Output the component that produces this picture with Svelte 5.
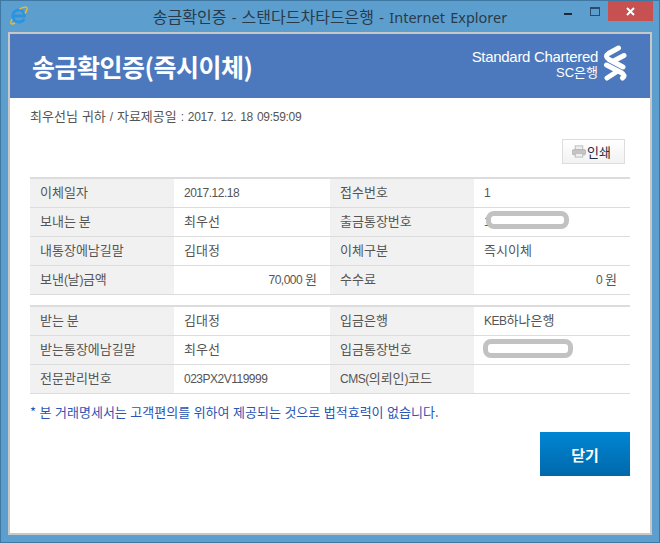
<script>
  const top = [
    ['이체일자', '2017.12.18', '접수번호', '1'],
    ['보내는 분', '최우선', '출금통장번호', ''],
    ['내통장에남길말', '김대정', '이체구분', '즉시이체'],
    ['보낸(날)금액', '70,000 원', '수수료', '0 원']
  ];
  const bottom = [
    ['받는 분', '김대정', '입금은행', 'KEB하나은행'],
    ['받는통장에남길말', '최우선', '입금통장번호', ''],
    ['전문관리번호', '023PX2V119999', 'CMS(의뢰인)코드', '']
  ];
  const runs = (text) => text.split(/([가-힣]+)/).filter(Boolean).map((t) => ({ t, ko: /[가-힣]/.test(t) }));
</script>

{#snippet mixed(text)}{#each runs(text) as r}<span class:lat={!r.ko}>{r.t}</span>{/each}{/snippet}

<div class="win">
  <div class="titlebar">
    <svg class="ie" width="20" height="20" viewBox="0 0 20 20">
      <path d="M4 10H15.500C15.500 6 12.500 4 9.800 4 6.500 4 3.700 6.800 3.700 10 3.700 13.500 6.500 16 9.800 16 12.200 16 14.200 14.800 15.200 13" fill="none" stroke="#2a94e0" stroke-width="2.800"/>
      <path d="M3 13C0.500 18 2 19 6 17M10.500 3.200C15 0.500 18.800 0.300 18 3 17.700 4.500 17 6 16 7.500" fill="none" stroke="#eeba2a" stroke-width="1.400"/>
    </svg>
    <div class="title">{#each runs('송금확인증 - 스탠다드차타드은행 - Internet Explorer') as r}<span class:tlat={!r.ko}>{r.t}</span>{/each}</div>
    <div class="controls">
      <span class="min"></span>
      <span class="max"></span>
      <span class="close">
        <svg width="9" height="9" viewBox="0 0 9 9"><path d="M1 1L8 8M8 1L1 8" stroke="#fff" stroke-width="2"/></svg>
      </span>
    </div>
  </div>

  <div class="page">
    <header class="banner">
      <h1>송금확인증(즉시이체)</h1>
      <div class="brand">
        <div class="brandtext">
          <div class="en">Standard Chartered</div>
          <div class="ko">SC은행</div>
        </div>
        <svg class="logo" width="24" height="36" viewBox="0 0 24 36">
          <g fill="none" stroke="#fff" stroke-width="5" stroke-linecap="round">
            <path d="M15.500 3L5.500 8.500C2.500 10.500 3 12.500 6 14.500L20 22"/>
            <path d="M21 10.500L10.500 16"/>
            <path d="M3.500 20L18 27.500C21.500 29.500 22 31.500 19.500 33"/>
            <path d="M4 33L12.500 27.500"/>
          </g>
        </svg>
      </div>
    </header>

    <div class="content">
      <p class="info">{@render mixed('최우선님 귀하 / 자료제공일 : 2017. 12. 18 09:59:09')}</p>
      <div class="actions">
        <button class="print">
          <svg width="14" height="13" viewBox="0 0 15 13">
            <rect x="3.500" y="0.500" width="8" height="4" fill="#eee" stroke="#bbb"/>
            <rect x="0.500" y="4.500" width="14" height="5.500" rx="1" fill="#c4c4c4" stroke="#b5b5b5"/>
            <rect x="3.500" y="8.500" width="8" height="4" fill="#eee" stroke="#bbb"/>
          </svg>
          <span>인쇄</span>
        </button>
      </div>

      {#each [top, bottom] as rows, t}
        <div class="table" class:second={t === 1}>
          {#each rows as row}
            <div class="row">
              <div class="th">{@render mixed(row[0])}</div>
              <div class="td" class:right={row[1].endsWith('원')}>{@render mixed(row[1])}</div>
              <div class="th">{@render mixed(row[2])}</div>
              <div class="td" class:right={row[3].endsWith('원')}>
                {#if row[2] === '출금통장번호'}
                  <span class="lat">1</span><span class="scribble a"></span>
                {:else if row[2] === '입금통장번호'}
                  <span class="scribble b"></span>
                {:else}
                  {@render mixed(row[3])}
                {/if}
              </div>
            </div>
          {/each}
        </div>
      {/each}

      <p class="note">* 본 거래명세서는 고객편의를 위하여 제공되는 것으로 법적효력이 없습니다.</p>

      <div class="footer">
        <button class="closebtn">닫기</button>
      </div>
    </div>
  </div>
</div>

<style>
  :global(html), :global(body) { margin: 0; padding: 0; }
  .win {
    width: 660px; height: 543px; box-sizing: border-box;
    background: #5c9fce;
    border: 1px solid #3f78a3;
    padding: 0 7px 7px 7px;
    display: flex; flex-direction: column;
    font-family: "Noto Sans CJK KR", "Liberation Sans", sans-serif;
    overflow: hidden;
  }
  .titlebar { height: 31px; display: flex; align-items: flex-start; position: relative; flex: none; }
  .ie { position: absolute; left: 1px; top: 5px; }
  .title {
    width: 100%; text-align: center; font-size: 16px; line-height: 20px; margin-top: 5px;
    color: #2b3a4a; box-sizing: border-box; word-spacing: 1.500px;
  }
  .tlat { font-family: "Noto Sans", sans-serif; font-size: 14.500px; }
  .controls { position: absolute; right: -1px; top: 0; display: flex; align-items: flex-start; }
  .min { width: 8px; height: 2px; background: #1c2a38; margin: 12px 18px 0 0; }
  .max { width: 8px; height: 6px; border: 1px solid #2d4a68; border-top-width: 2px; margin: 6px 8px 0 0; }
  .close { width: 45px; height: 20px; background: #c75050; display: flex; align-items: center; justify-content: center; }
  .page {
    flex: 1; background: #fff; border: 2px solid #c8c8c8;
    display: flex; flex-direction: column; min-height: 0;
  }
  .banner {
    height: 64px; flex: none; background: #4c78bd;
    display: flex; align-items: center; justify-content: space-between;
    padding: 0 23px 0 22px; color: #fff;
  }
  h1 { margin: 0; font-size: 25px; font-weight: 700; letter-spacing: -0.5px; }
  .brand { display: flex; align-items: flex-start; gap: 5px; margin-bottom: 2px; }
  .logo { margin-bottom: 4px; }
  .brandtext { text-align: right; line-height: 16px; margin-top: 4px; font-family: "Liberation Sans", "Noto Sans CJK KR", sans-serif; }
  .en { font-size: 15px; letter-spacing: -0.3px; }
  .ko { font-size: 13px; }
  .content { flex: 1; padding: 0 20px; font-size: 13px; color: #555; }
  .lat { font-family: "Liberation Sans", sans-serif; font-size: 12px; letter-spacing: -0.5px; }
  .info { margin: 0; padding-top: 10px; height: 30px; line-height: 15px; box-sizing: border-box; word-spacing: 1px; }
  .info .lat { letter-spacing: -0.3px; }
  .actions { display: flex; justify-content: flex-end; padding: 11px 5px 0 0; height: 38px; box-sizing: content-box; }
  .print {
    width: 63px; height: 25px; box-sizing: border-box; border: 1px solid #ddd;
    background: linear-gradient(#fff, #f2f2f2);
    display: flex; align-items: center; justify-content: center; gap: 1px;
    padding: 0 4px 0 0; font: inherit; color: #1d2a44;
  }
  .table { border-top: 2px solid #dcdcdc; }
  .table.second { margin-top: 10px; }
  .row {
    display: grid; grid-template-columns: 144px 156px 144px 156px;
    height: 29px; box-sizing: border-box; border-bottom: 1px solid #dcdcdc;
  }
  .th { background: #f1f1f1; padding-left: 10px; line-height: 26px; }
  .td { padding: 0 13px 0 10px; line-height: 26px; position: relative; }
  .right { text-align: right; }
  .scribble {
    position: absolute; box-sizing: border-box;
    border: 5px solid #c2c2c2; border-radius: 8px; background: #fff;
  }
  .a { left: 12px; top: 3px; width: 83px; height: 18px; }
  .b { left: 9px; top: 3px; width: 90px; height: 19px; }
  .note { margin: 10px 0 0; color: #2b55b5; font-size: 13px; line-height: 16px; word-spacing: 0.6px; }
  .footer { display: flex; justify-content: flex-end; padding-top: 12px; }
  .closebtn {
    width: 90px; height: 44px; border: 0; padding: 0;
    background: linear-gradient(#0086d3, #0068ab);
    color: #fff; font: inherit; font-size: 15px; font-weight: 700;
  }
</style>
